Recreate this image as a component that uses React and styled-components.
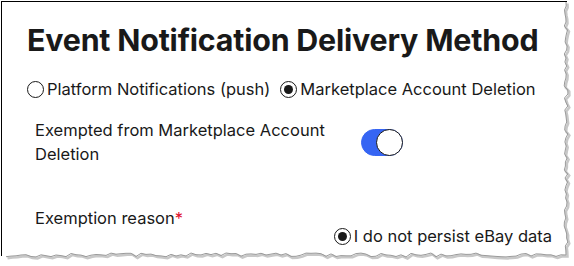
import React from "react";
import styled, { createGlobalStyle } from "styled-components";

const Global = createGlobalStyle`
  html, body { margin: 0; padding: 0; background: #fff; }
  body { font-family: Inter, "Liberation Sans", Arial, sans-serif; color: #111820; }
`;

const Frame = styled.div`
  position: relative;
  width: 574px;
  height: 266px;
  overflow: hidden;
  background: #fff;
`;

const Sheet = styled.div`
  position: absolute;
  left: 1px;
  top: 1px;
  width: 566px;
  height: 255px;
  border-left: 1.5px solid #000;
  border-top: 1.5px solid #000;
  box-sizing: border-box;
  overflow: hidden;
`;

const Content = styled.div`
  display: flex;
  flex-direction: column;
  padding: 20px 0 0 25px;
`;

const Title = styled.h1`
  margin: 0;
  font-size: 30.4px;
  font-weight: 700;
  line-height: 36px;
  letter-spacing: -0.2px;
  color: #191919;
  white-space: nowrap;
`;

const RadioRow = styled.div`
  display: flex;
  align-items: center;
  gap: 10px;
  margin-top: 20px;
`;

const RadioLabel = styled.label`
  display: flex;
  align-items: center;
  gap: 3px;
  font-size: 16.5px;
  line-height: 22px;
  color: #191919;
`;

const Dot = styled.span`
  width: 17px;
  height: 17px;
  box-sizing: border-box;
  border-radius: 50%;
  border: 1.5px solid #191919;
  display: inline-flex;
  align-items: center;
  justify-content: center;
  flex: none;
  &::after {
    content: "";
    width: 9px;
    height: 9px;
    border-radius: 50%;
    background: #191919;
    display: ${(p) => (p.$checked ? "block" : "none")};
  }
`;

const Field = styled.div`
  display: flex;
  align-items: center;
  padding-left: 8px;
  margin-top: 18px;
`;

const FieldLabel = styled.div`
  width: 300px;
  font-size: 16.5px;
  line-height: 24px;
  color: #191919;
`;

const Toggle = styled.span`
  position: relative;
  margin-left: 26px;
  width: 42px;
  height: 27px;
  box-sizing: border-box;
  border-radius: 14px;
  background: #3665f3;
  border: 1px solid #3665f3;
  &::after {
    content: "";
    position: absolute;
    right: -1px;
    top: -1px;
    width: 27px;
    height: 27px;
    box-sizing: border-box;
    border-radius: 50%;
    background: #fff;
    border: 1.5px solid #191919;
  }
`;

const ReasonLabel = styled.div`
  padding-left: 8px;
  margin-top: 41px;
  font-size: 16.5px;
  line-height: 22px;
  color: #191919;
`;

const Req = styled.span`
  color: #e0102f;
`;

const ReasonRow = styled.div`
  display: flex;
  justify-content: flex-end;
  padding-right: 15px;
  margin-top: -4px;
`;

const Torn = styled.svg`
  position: absolute;
  left: 0;
  top: 0;
  pointer-events: none;
`;

function tornPath() {
  const pts = [];
  let seed = 7;
  const rnd = () => {
    seed = (seed * 9301 + 49297) % 233280;
    return seed / 233280;
  };
  for (let y = 2; y <= 250; y += 4) {
    pts.push(`${(564 + rnd() * 4).toFixed(1)},${y}`);
  }
  for (let x = 566; x >= 2; x -= 5) {
    pts.push(`${x},${(253 + rnd() * 4).toFixed(1)}`);
  }
  return pts.join(" ");
}

const edge = tornPath();

export default function App() {
  return (
    <>
      <Global />
      <Frame>
        <Sheet>
          <Content>
            <Title>Event Notification Delivery Method</Title>
            <RadioRow>
              <RadioLabel>
                <Dot />
                Platform Notifications (push)
              </RadioLabel>
              <RadioLabel>
                <Dot $checked />
                Marketplace Account Deletion
              </RadioLabel>
            </RadioRow>
            <Field>
              <FieldLabel>Exempted from Marketplace Account Deletion</FieldLabel>
              <Toggle />
            </Field>
            <ReasonLabel>
              Exemption reason<Req>*</Req>
            </ReasonLabel>
            <ReasonRow>
              <RadioLabel>
                <Dot $checked />
                I do not persist eBay data
              </RadioLabel>
            </ReasonRow>
          </Content>
        </Sheet>
        <Torn width="574" height="266" viewBox="0 0 574 266">
          <polyline points={edge} fill="none" stroke="#c8c8c8" strokeWidth="2.5" transform="translate(1.5,1.5)" />
          <polyline points={edge} fill="none" stroke="#9a9a9a" strokeWidth="1" />
        </Torn>
      </Frame>
    </>
  );
}
